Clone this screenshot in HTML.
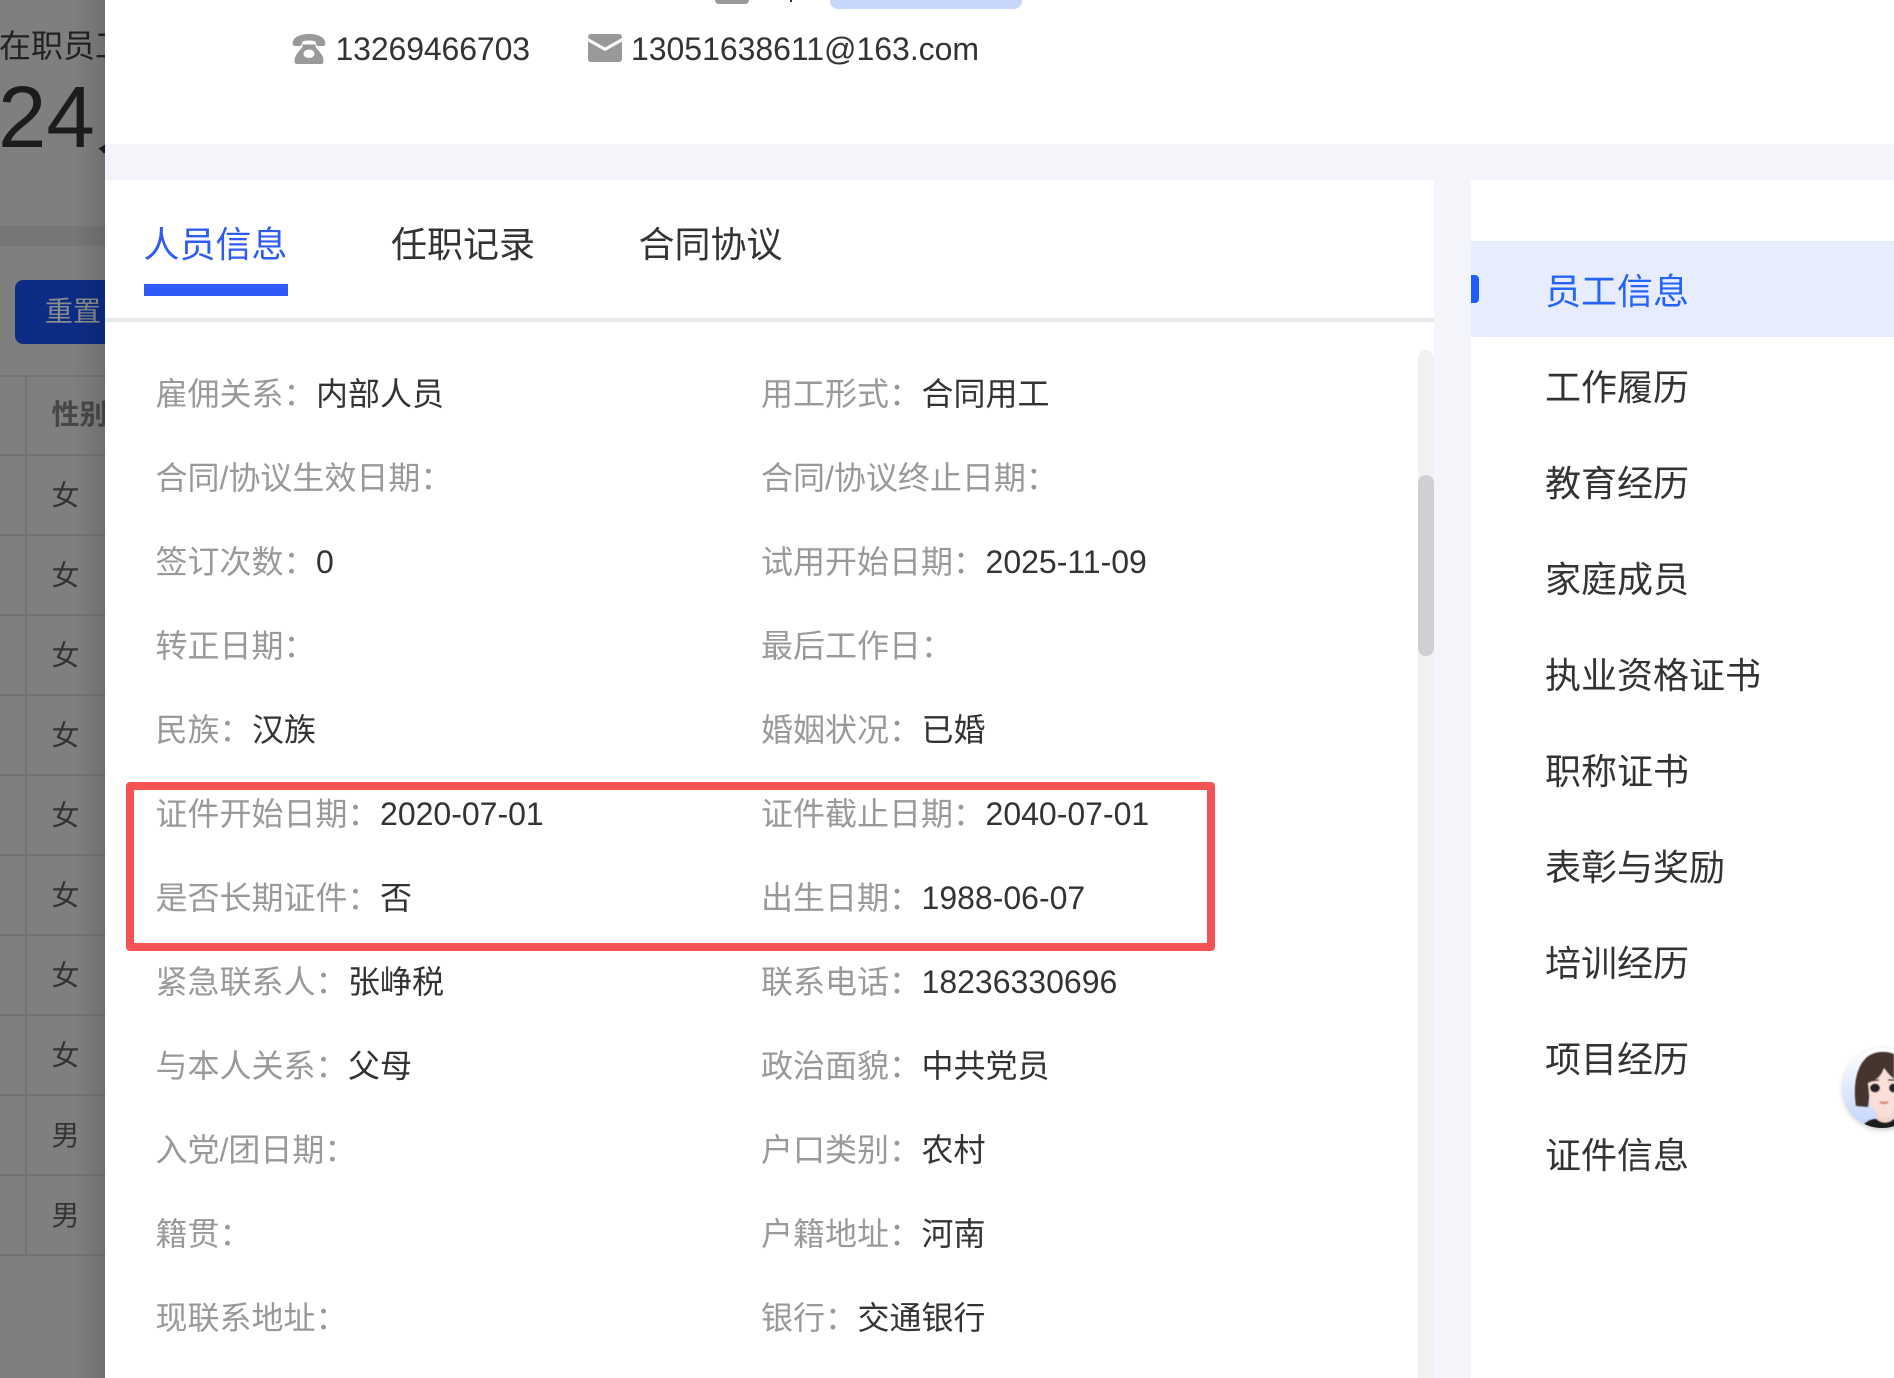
<!DOCTYPE html>
<html><head><meta charset="utf-8"><style>
html,body{margin:0;padding:0;width:1894px;height:1378px;overflow:hidden;background:#808080}
body{position:relative;font-family:"Liberation Sans","Noto Sans CJK SC",sans-serif;color:#333}
.a{position:absolute;white-space:nowrap}
.t{font-size:32px;line-height:40px;height:40px;margin-top:.5px}
.t i{font-style:normal;color:#999;margin-right:.5px}
.r{position:absolute;left:0;width:105px;height:2px;background:#737377}
.s{position:absolute;left:51.500px;font-size:28px;line-height:36px;color:#333}
.n{position:absolute;left:1545px;font-size:36px;line-height:48px;color:#333;white-space:nowrap}
.tab{position:absolute;top:221px;font-size:36px;line-height:48px;color:#333;white-space:nowrap}
</style></head><body>
<div class="a" style="left:0;top:0;width:105px;height:1378px;overflow:hidden;background:#7f7f7f">
<div class="a" style="left:-1px;top:26px;font-size:32px;line-height:40px;color:#222">在职员工</div>
<div class="a" style="left:-2px;top:68px;font-size:87px;line-height:100px;color:#1c1c1c">24人</div>
<div class="a" style="left:0;top:226px;width:105px;height:20px;background:#777"></div>
<div class="a" style="left:15px;top:280px;width:110px;height:64px;border-radius:8px;background:#0c2d83"></div>
<div class="a" style="left:45px;top:292px;font-size:28px;line-height:40px;color:#8c8c8c">重置</div>
<div class="r" style="top:375px"></div><div class="r" style="top:454px"></div><div class="r" style="top:534px"></div><div class="r" style="top:614px"></div><div class="r" style="top:694px"></div><div class="r" style="top:774px"></div><div class="r" style="top:854px"></div><div class="r" style="top:934px"></div><div class="r" style="top:1014px"></div><div class="r" style="top:1094px"></div><div class="r" style="top:1174px"></div><div class="r" style="top:1254px"></div>
<div class="a" style="left:25px;top:375px;width:2px;height:880px;background:#737377"></div>
<div class="s" style="top:397px;font-weight:700;color:#474747">性别</div>
<div class="s" style="top:478px">女</div><div class="s" style="top:558px">女</div><div class="s" style="top:638px">女</div><div class="s" style="top:718px">女</div><div class="s" style="top:798px">女</div><div class="s" style="top:878px">女</div><div class="s" style="top:958px">女</div><div class="s" style="top:1038px">女</div><div class="s" style="top:1118px">男</div><div class="s" style="top:1198px">男</div>
<div class="a" style="left:75px;top:0;width:30px;height:1378px;background:linear-gradient(90deg,rgba(0,0,0,0),rgba(0,0,0,.12))"></div>
</div>

<div class="a" style="left:105px;top:0;width:1789px;height:1378px;background:#fff"></div>
<div class="a" style="left:715px;top:0;width:34px;height:4px;background:#999;border-radius:0 0 4px 4px"></div>
<div class="a" style="left:790px;top:0;width:2px;height:2px;background:#333"></div>
<div class="a" style="left:830px;top:0;width:192px;height:9px;background:#c6d6fc;border-radius:0 0 8px 8px"></div>

<svg class="a" style="left:292px;top:34px" width="34" height="30" viewBox="0 0 34 30"><path fill="#999" fill-rule="evenodd" d="M17 0C9 0 2 2.500 .8 8C.3 10.500 1 12 3 12H7.500C9.500 12 10 10.500 10 8.500C10 7 13 6.500 17 6.500S24 7 24 8.500C24 10.500 24.500 12 26.500 12H31C33 12 33.700 10.500 33.200 8C32 2.500 25 0 17 0ZM10.500 10.500H23.500V12C23.500 14 26 15.500 28.500 19C30.500 21.800 31.500 24 31.500 27C31.500 29 30.500 30 29 30H5C3.500 30 2.500 29 2.500 27C2.500 24 3.500 21.800 5.500 19C8 15.500 10.500 14 10.500 12ZM17 15.500C13.800 15.500 11.500 17.300 11.500 19.800S13.800 24 17 24S22.500 22.300 22.500 19.800S20.200 15.500 17 15.500Z"/></svg>
<div class="a" style="left:335.500px;top:29px;font-size:32px;line-height:40px;color:#333;letter-spacing:-.12px">13269466703</div>
<svg class="a" style="left:588px;top:34px" width="34" height="28" viewBox="0 0 34 28"><path fill="#999" d="M3 0H31C32.700 0 34 1.300 34 3V4L17 13.500L0 4V3C0 1.300 1.300 0 3 0ZM0 7.500L17 17L34 7.500V25C34 26.700 32.700 28 31 28H3C1.300 28 0 26.700 0 25Z"/></svg>
<div class="a" style="left:631px;top:29px;font-size:32px;line-height:40px;color:#333;letter-spacing:-.03px">13051638611@163.com</div>

<div class="a" style="left:105px;top:144px;width:1789px;height:36px;background:#f4f5fb"></div>
<div class="a" style="left:1434px;top:180px;width:37px;height:1198px;background:#f4f5fb"></div>

<div class="tab" style="left:143.500px;color:#2f5bf5">人员信息</div>
<div class="tab" style="left:391px">任职记录</div>
<div class="tab" style="left:638.500px">合同协议</div>
<div class="a" style="left:144px;top:284px;width:144px;height:12px;background:#2f5bf5"></div>
<div class="a" style="left:105px;top:318px;width:1329px;height:4px;background:#e5e8ec"></div>

<div class="a t" style="left:155.500px;top:373px"><i>雇佣关系：</i>内部人员</div>
<div class="a t" style="left:761px;top:373px"><i>用工形式：</i>合同用工</div>
<div class="a t" style="left:155.500px;top:457px"><i>合同/协议生效日期：</i></div>
<div class="a t" style="left:761px;top:457px"><i>合同/协议终止日期：</i></div>
<div class="a t" style="left:155.500px;top:541px"><i>签订次数：</i>0</div>
<div class="a t" style="left:761px;top:541px"><i>试用开始日期：</i>2025-11-09</div>
<div class="a t" style="left:155.500px;top:625px"><i>转正日期：</i></div>
<div class="a t" style="left:761px;top:625px"><i>最后工作日：</i></div>
<div class="a t" style="left:155.500px;top:709px"><i>民族：</i>汉族</div>
<div class="a t" style="left:761px;top:709px"><i>婚姻状况：</i>已婚</div>
<div class="a t" style="left:155.500px;top:793px"><i>证件开始日期：</i>2020-07-01</div>
<div class="a t" style="left:761px;top:793px"><i>证件截止日期：</i>2040-07-01</div>
<div class="a t" style="left:155.500px;top:877px"><i>是否长期证件：</i>否</div>
<div class="a t" style="left:761px;top:877px"><i>出生日期：</i>1988-06-07</div>
<div class="a t" style="left:155.500px;top:961px"><i>紧急联系人：</i>张峥税</div>
<div class="a t" style="left:761px;top:961px"><i>联系电话：</i>18236330696</div>
<div class="a t" style="left:155.500px;top:1045px"><i>与本人关系：</i>父母</div>
<div class="a t" style="left:761px;top:1045px"><i>政治面貌：</i>中共党员</div>
<div class="a t" style="left:155.500px;top:1129px"><i>入党/团日期：</i></div>
<div class="a t" style="left:761px;top:1129px"><i>户口类别：</i>农村</div>
<div class="a t" style="left:155.500px;top:1213px"><i>籍贯：</i></div>
<div class="a t" style="left:761px;top:1213px"><i>户籍地址：</i>河南</div>
<div class="a t" style="left:155.500px;top:1297px"><i>现联系地址：</i></div>
<div class="a t" style="left:761px;top:1297px"><i>银行：</i>交通银行</div>

<div class="a" style="left:126px;top:782px;width:1089px;height:169px;box-sizing:border-box;border:8px solid #f55353;border-radius:4px"></div>

<div class="a" style="left:1418px;top:350px;width:16px;height:1028px;background:#f1f1f1;border-radius:8px 8px 0 0"></div>
<div class="a" style="left:1418px;top:475px;width:16px;height:181px;background:#cfd0d2;border-radius:8px"></div>

<div class="a" style="left:1471px;top:241px;width:423px;height:96px;background:#e8ecff"></div>
<div class="a" style="left:1471px;top:275px;width:8px;height:28px;background:#1d5cff;border-radius:0 4px 4px 0"></div>
<div class="n" style="top:268px;color:#2563fa">员工信息</div>
<div class="n" style="top:364px">工作履历</div>
<div class="n" style="top:460px">教育经历</div>
<div class="n" style="top:556px">家庭成员</div>
<div class="n" style="top:652px">执业资格证书</div>
<div class="n" style="top:748px">职称证书</div>
<div class="n" style="top:844px">表彰与奖励</div>
<div class="n" style="top:940px">培训经历</div>
<div class="n" style="top:1036px">项目经历</div>
<div class="n" style="top:1132px">证件信息</div>

<svg class="a" style="left:1834px;top:1040px" width="60" height="98" viewBox="0 0 60 98">
<defs><linearGradient id="g" x1="0" y1="0" x2="0" y2="1"><stop offset="0" stop-color="#fff"/><stop offset="1" stop-color="#c3d4fb"/></linearGradient><filter id="b"><feGaussianBlur stdDeviation="3"/></filter><filter id="s"><feGaussianBlur stdDeviation=".6"/></filter><clipPath id="c"><circle cx="48" cy="48" r="40"/></clipPath></defs>
<circle cx="49" cy="50" r="40" fill="#000" opacity=".22" filter="url(#b)"/>
<circle cx="48" cy="48" r="40" fill="url(#g)"/>
<g clip-path="url(#c)" filter="url(#s)">
<path fill="#1e1a1b" d="M28 86C36 78 42 78 50 80C58 78 64 78 72 86V92H28Z"/>
<path fill="#f4d4cc" d="M42 66H60V78C56 84 46 84 42 78Z"/>
<path fill="#45352f" d="M22 66C19 46 22 28 32 18C38 12 50 10 60 14V50H36L34 67Z"/>
<path fill="#f9dfd8" d="M34 43C40 41 47 38 50 28C54 34 58 38 62 40V66C58 74 54 78 50 78C44 76 38 70 36 62Z"/>
<ellipse cx="41" cy="48" rx="5" ry="4.500" fill="#2a2223"/>
<ellipse cx="59" cy="48" rx="4" ry="4.500" fill="#2a2223"/>
<path d="M34 41L45 40M54 40L62 40" stroke="#4a3833" stroke-width="1.500" fill="none"/>
<path d="M46 62Q50 64 54 62" stroke="#d98b80" stroke-width="2.500" fill="none"/>
</g></svg>
</body></html>
